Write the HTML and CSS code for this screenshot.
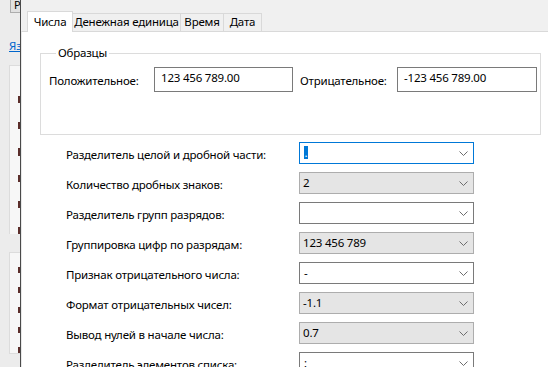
FILE: index.html
```html
<!DOCTYPE html>
<html>
<head>
    <meta charset="utf-8">
    <link rel="stylesheet" href="styles.css">
</head>
<body>
    <div class="backwin">
        <div class="bw-btn">Р</div>
        <a class="bw-link" href="#">Яз</a>
        <div class="bw-group">
            <span class="bw-mark first"></span>
            <span class="bw-mark"></span>
            <span class="bw-mark"></span>
            <span class="bw-mark"></span>
            <span class="bw-mark"></span>
            <span class="bw-mark"></span>
        </div>
        <div class="bw-group second">
            <span class="bw-mark first"></span>
            <span class="bw-mark"></span>
            <span class="bw-mark"></span>
            <span class="bw-mark"></span>
            <span class="bw-mark"></span>
        </div>
    </div>

    <div class="dialog">
        <div class="tabs">
            <div class="tab active">Числа</div>
            <div class="tab tab-money">Денежная единица</div>
            <div class="tab tab-time">Время</div>
            <div class="tab tab-date">Дата</div>
        </div>

        <div class="page">
            <fieldset class="samples">
                <legend>Образцы</legend>
                <div class="sample-row">
                    <span class="sample-label">Положительное:</span>
                    <div class="textbox">123 456 789.00</div>
                    <span class="sample-label neg">Отрицательное:</span>
                    <div class="textbox wide">-123 456 789.00</div>
                </div>
            </fieldset>

            <div class="settings">
                <div class="row">
                    <span class="row-label">Разделитель целой и дробной части:</span>
                    <div class="combo edit focused"><span class="value"><span class="sel">.</span></span><svg class="chev" width="9" height="5" viewBox="0 0 9 5"><polyline points="0.5,0.5 4.5,4.5 8.5,0.5" /></svg></div>
                </div>
                <div class="row">
                    <span class="row-label">Количество дробных знаков:</span>
                    <div class="combo list"><span class="value">2</span><svg class="chev" width="9" height="5" viewBox="0 0 9 5"><polyline points="0.5,0.5 4.5,4.5 8.5,0.5" /></svg></div>
                </div>
                <div class="row">
                    <span class="row-label">Разделитель групп разрядов:</span>
                    <div class="combo edit"><span class="value"></span><svg class="chev" width="9" height="5" viewBox="0 0 9 5"><polyline points="0.5,0.5 4.5,4.5 8.5,0.5" /></svg></div>
                </div>
                <div class="row">
                    <span class="row-label">Группировка цифр по разрядам:</span>
                    <div class="combo list"><span class="value">123 456 789</span><svg class="chev" width="9" height="5" viewBox="0 0 9 5"><polyline points="0.5,0.5 4.5,4.5 8.5,0.5" /></svg></div>
                </div>
                <div class="row">
                    <span class="row-label">Признак отрицательного числа:</span>
                    <div class="combo edit"><span class="value">-</span><svg class="chev" width="9" height="5" viewBox="0 0 9 5"><polyline points="0.5,0.5 4.5,4.5 8.5,0.5" /></svg></div>
                </div>
                <div class="row">
                    <span class="row-label">Формат отрицательных чисел:</span>
                    <div class="combo list"><span class="value">-1.1</span><svg class="chev" width="9" height="5" viewBox="0 0 9 5"><polyline points="0.5,0.5 4.5,4.5 8.5,0.5" /></svg></div>
                </div>
                <div class="row">
                    <span class="row-label">Вывод нулей в начале числа:</span>
                    <div class="combo list"><span class="value">0.7</span><svg class="chev" width="9" height="5" viewBox="0 0 9 5"><polyline points="0.5,0.5 4.5,4.5 8.5,0.5" /></svg></div>
                </div>
                <div class="row">
                    <span class="row-label">Разделитель элементов списка:</span>
                    <div class="combo edit"><span class="value">;</span><svg class="chev" width="9" height="5" viewBox="0 0 9 5"><polyline points="0.5,0.5 4.5,4.5 8.5,0.5" /></svg></div>
                </div>
            </div>
        </div>
    </div>
</body>
</html>
```

FILE: styles.css
```css
body {
    margin: 0;
    width: 548px;
    height: 367px;
    overflow: hidden;
    display: flex;
    font-family: "Noto Sans", sans-serif;
    font-size: 11.5px;
    letter-spacing: -0.2px;
    color: #000;
    background-color: #f0f0f0;
}

/* window behind the dialog */
.backwin {
    width: 20px;
    flex: none;
    display: flex;
    flex-direction: column;
    background-color: #ececec;
}
.bw-btn {
    height: 12px;
    margin-left: 10px;
    padding-left: 3px;
    background-color: #e1e1e1;
    border: 1px solid #adadad;
    border-top: none;
    border-right: none;
    line-height: 10px;
    font-size: 11px;
    overflow: hidden;
}
.bw-link {
    margin: 26px 0 0 9px;
    color: #0066cc;
    line-height: 14px;
    white-space: nowrap;
    overflow: hidden;
}
.bw-group {
    margin: 12px 0 0 9px;
    height: 168px;
    background-color: #f7f7f7;
    border-top: 1px solid #dcdcdc;
    border-left: 1px solid #dcdcdc;
    display: flex;
    flex-direction: column;
    align-items: flex-end;
}
.bw-group.second {
    margin-top: 18px;
    height: 100px;
    border-bottom: 1px solid #dcdcdc;
}
.bw-mark {
    width: 2px;
    height: 8px;
    margin-top: 19px;
    background-color: #5b2e2b;
}
.bw-mark.first {
    margin-top: 30px;
}
.bw-group.second .bw-mark {
    margin-top: 14px;
}
.bw-group.second .bw-mark.first {
    margin-top: 14px;
}

/* dialog */
.dialog {
    flex: 1;
    min-width: 0;
    display: flex;
    flex-direction: column;
    padding-top: 11px;
    border-left: 1px solid #4a4a4a;
    background-color: #f0f0f0;
}
.tabs {
    display: flex;
    align-items: flex-end;
    height: 20px;
    margin-left: 6px;
    position: relative;
    z-index: 1;
}
.tab {
    box-sizing: border-box;
    height: 18px;
    margin-left: -1px;
    border: 1px solid #d9d9d9;
    border-bottom: none;
    background-color: #f0f0f0;
    text-align: center;
    line-height: 16px;
    white-space: nowrap;
}
.tab.active {
    width: 46px;
    height: 21px;
    margin-left: 0;
    margin-bottom: -1px;
    padding-top: 2px;
    background-color: #fff;
}
.tab-money {
    width: 109px;
}
.tab-time {
    width: 44px;
}
.tab-date {
    width: 39px;
}

.page {
    flex: 1;
    background-color: #fff;
    border-top: 1px solid #d9d9d9;
    border-left: 1px solid #e8e8e8;
}

.samples {
    box-sizing: border-box;
    width: 501px;
    margin: 13px 0 0 18px;
    padding: 6px 0 42px 8px;
    border: 1px solid #dcdcdc;
}
.samples legend {
    margin-left: 7px;
    padding: 0 2px;
    line-height: 16px;
}
.sample-row {
    display: flex;
    align-items: center;
    height: 25px;
}
.sample-label {
    width: 105px;
    padding-top: 3px;
    line-height: 16px;
    white-space: nowrap;
}
.sample-label.neg {
    width: 97px;
    margin-left: 7px;
}
.textbox {
    box-sizing: border-box;
    width: 139px;
    height: 25px;
    padding: 2px 0 0 6px;
    border: 1px solid #7a7a7a;
    line-height: 16px;
    white-space: nowrap;
}
.textbox.wide {
    width: 140px;
}

.settings {
    margin-top: 7px;
    padding-left: 44px;
}
.row {
    display: flex;
    align-items: center;
    height: 22px;
    margin-bottom: 8px;
}
.row-label {
    width: 233px;
    padding-top: 4px;
    line-height: 16px;
    white-space: nowrap;
}
.combo {
    box-sizing: border-box;
    width: 175px;
    height: 22px;
    display: flex;
    align-items: center;
    padding-left: 3px;
    border: 1px solid #7a7a7a;
    background-color: #fff;
}
.combo.list {
    border-color: #adadad;
    background-color: #e5e5e5;
}
.combo.edit {
    padding-left: 4px;
}
.combo.focused {
    border-color: #0078d7;
}
.value {
    flex: 1;
    line-height: 16px;
    white-space: nowrap;
}
.sel {
    display: inline-block;
    width: 4px;
    line-height: 13px;
    background-color: #0078d7;
    color: #fff;
    text-align: center;
}
.chev {
    margin-right: 5px;
    fill: none;
    stroke: #6d6d6d;
    stroke-width: 1;
}
```
